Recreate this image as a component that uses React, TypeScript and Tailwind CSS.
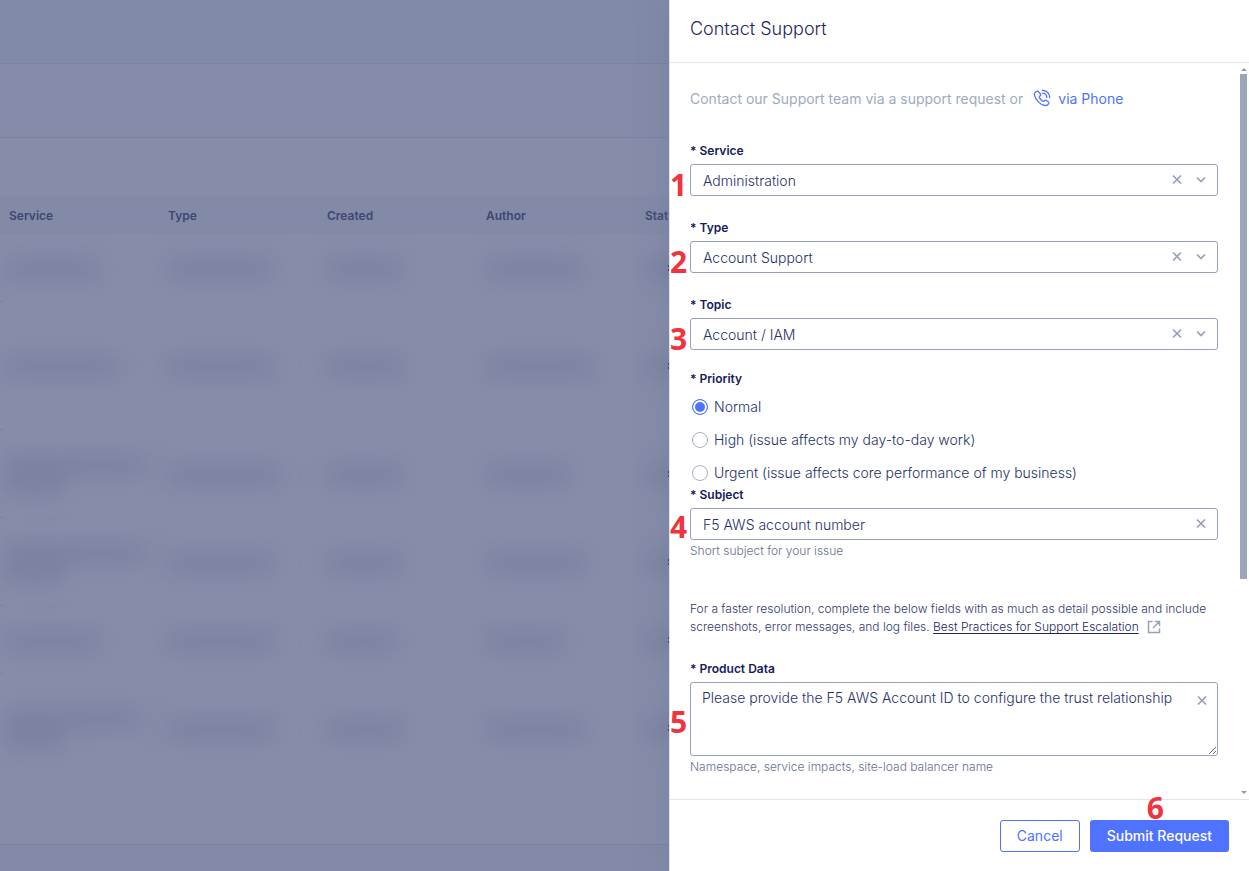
import React from "react";

const columns = ["Service", "Type", "Created", "Author", "Status"];

type Row = { height: string; first: string[]; rest: string[] };

const rows: Row[] = [
  { height: "h-[68px]", first: ["w-[96px]"], rest: ["w-[104px]", "w-[76px]", "w-[96px]"] },
  { height: "h-[128px]", first: ["w-[114px]"], rest: ["w-[106px]", "w-[76px]", "w-[108px]"] },
  { height: "h-[88px]", first: ["w-[140px]", "w-[60px]"], rest: ["w-[112px]", "w-[76px]", "w-[84px]"] },
  { height: "h-[88px]", first: ["w-[140px]", "w-[60px]"], rest: ["w-[106px]", "w-[76px]", "w-[100px]"] },
  { height: "h-[68px]", first: ["w-[96px]"], rest: ["w-[106px]", "w-[70px]", "w-[78px]"] },
  { height: "h-[108px]", first: ["w-[136px]", "w-[60px]"], rest: ["w-[106px]", "w-[76px]", "w-[98px]"] },
];

function Obscured({ widths }: { widths: string[] }) {
  return (
    <div className="flex flex-col gap-0.5 pt-0.5 blur-[11px]">
      {widths.map((w, i) => (
        <div key={i} className={`h-[18px] bg-[#7980a0] ${w}`} />
      ))}
    </div>
  );
}

function RequestsTable() {
  return (
    <main className="flex min-w-0 flex-1 flex-col overflow-hidden bg-[#868da9]">
      <div className="h-16 shrink-0 border-b border-[#7a83a5] bg-[#818aa7]" />
      <div className="h-[74px] shrink-0 border-b border-[#7a83a5] bg-[#848ba8]" />
      <div className="h-[58px] shrink-0" />
      <div className="min-h-0 flex-1 overflow-hidden">
        <table className="w-[795px] table-fixed border-collapse text-left">
          <thead>
            <tr className="h-[38px] bg-[#838aa7]">
              {columns.map((c) => (
                <th key={c} scope="col" className="p-0 pt-0.5 pl-[9px] text-[12px] font-semibold text-[#3d4771]">
                  {c}
                </th>
              ))}
            </tr>
          </thead>
          <tbody>
            {rows.map((row, i) => (
              <tr key={i} className={row.height}>
                <td className="relative p-0 pl-1">
                  <Obscured widths={row.first} />
                  {i < rows.length - 1 && <div className="absolute bottom-0 left-0 h-px w-[3px] bg-[#7780a3]" />}
                </td>
                {row.rest.map((w, j) => (
                  <td key={j} className="p-0 pl-[9px]">
                    <Obscured widths={[w]} />
                  </td>
                ))}
                <td className="relative p-0 pl-[9px]">
                  <Obscured widths={["w-[60px]"]} />
                  <div className="absolute top-1/2 left-8 flex -translate-y-1/2 flex-col gap-0.5">
                    <div className="h-0.5 w-px bg-[#1f4478]" />
                    <div className="h-0.5 w-px bg-[#1f4478]" />
                  </div>
                </td>
              </tr>
            ))}
          </tbody>
        </table>
      </div>
      <div className="h-[27px] shrink-0 border-t border-[#7a83a5] bg-[#838aa7]" />
    </main>
  );
}

function Step({ n, className }: { n: number; className: string }) {
  return (
    <span
      className={`pointer-events-none absolute font-['Open_Sans','Noto_Sans',sans-serif] text-[30px] leading-8 font-bold text-[#f0333c] ${className}`}
    >
      {n}
    </span>
  );
}

function ClearButton({ label, className = "" }: { label: string; className?: string }) {
  return (
    <button type="button" aria-label={label} className={`flex size-4 items-center justify-center text-[#97a1b8] ${className}`}>
      <svg viewBox="0 0 16 16" className="size-4" fill="none" stroke="currentColor" strokeWidth="1.7">
        <path d="M4 3.500l8 8M12 3.500l-8 8" />
      </svg>
    </button>
  );
}

function FieldLabel({ htmlFor, children }: { htmlFor: string; children: React.ReactNode }) {
  return (
    <label htmlFor={htmlFor} className="mb-1 block text-[12px] leading-[18px] font-semibold text-[#15205b]">
      * {children}
    </label>
  );
}

function SelectField({ id, label, value, step }: { id: string; label: string; value: string; step: number }) {
  return (
    <div>
      <FieldLabel htmlFor={id}>{label}</FieldLabel>
      <div className="relative flex h-8 items-center rounded-[3px] border border-[#97a1b8] pr-2">
        <Step n={step} className="top-1 -left-[21px]" />
        <select
          id={id}
          defaultValue={value}
          className="h-full min-w-0 flex-1 appearance-none bg-transparent pl-3 text-[14px] font-light text-[#26316a] outline-none"
        >
          <option>{value}</option>
        </select>
        <ClearButton label={`Clear ${label}`} className="mr-2" />
        <svg viewBox="0 0 16 16" className="pointer-events-none size-4" fill="none" stroke="#97a1b8" strokeWidth="1.7">
          <path d="M4 5.500l4 4 4-4" />
        </svg>
      </div>
    </div>
  );
}

const priorities = ["Normal", "High (issue affects my day-to-day work)", "Urgent (issue affects core performance of my business)"];

function PhoneIcon() {
  return (
    <svg viewBox="0 0 18 18" className="mb-0.5 size-[18px]" fill="none" stroke="currentColor" strokeWidth="1.3" strokeLinecap="round" strokeLinejoin="round">
      <path d="M3.400 2.500C1.900 3.300 1 4.500 1.400 6.200c.5 2.300 2.100 4.900 4.200 6.900 1.900 1.900 4.300 3.200 6.300 3.400 1.600.2 3-.6 3.800-1.900.4-.7.200-1.300-.3-1.700l-2-1.500c-.5-.4-1.100-.4-1.600 0l-1.100.8c-.4.300-.8.200-1.200-.1C8.300 11.200 7.200 10 6.400 8.600c-.2-.4-.2-.8.1-1.100l.9-1c.4-.5.400-1 .1-1.500L5.700 2.800c-.6-.8-1.400-.8-2.300-.3z" />
      <path d="M9.200 1.300c4.200-.2 7.500 3.100 7.500 7.200M9.500 4.200c2.500-.1 4.300 1.800 4.300 4.300" />
    </svg>
  );
}

function SupportPanel() {
  return (
    <aside className="relative flex w-[580px] max-w-full shrink-0 flex-col border-l border-[#dfe2ee] bg-white shadow-[0_0_30px_rgba(100,113,152,0.35)]">
      <header className="shrink-0 border-b border-[#e3e5f2] px-5 pt-[15px] pb-[19px]">
        <h1 className="text-[18px] leading-7 font-light text-[#1c2761]">Contact Support</h1>
      </header>

      <div className="flex min-h-0 flex-1">
        <form id="support-form" className="min-w-0 flex-1 overflow-hidden pt-[26px] pr-[22px] pl-5">
          <p className="flex items-center text-[14px] leading-5 text-[#a0a9be]">
            Contact our Support team via a support request or
            <a href="#phone" className="ml-2.5 flex items-center gap-[7px] text-[#4f73ff]">
              <PhoneIcon />
              via Phone
            </a>
          </p>

          <div className="mt-[33px] flex flex-col gap-[23px]">
            <SelectField id="service" label="Service" value="Administration" step={1} />
            <SelectField id="type" label="Type" value="Account Support" step={2} />
            <SelectField id="topic" label="Topic" value="Account / IAM" step={3} />
          </div>

          <fieldset className="mt-5">
            <legend className="text-[12px] leading-[18px] font-semibold text-[#15205b]">* Priority</legend>
            <div className="mt-[9px] flex flex-col gap-[13px]">
              {priorities.map((p, i) => (
                <label key={p} className="flex items-center gap-1.5 pl-0.5 text-[14px] leading-5 font-light text-[#26316a]">
                  <input
                    type="radio"
                    name="priority"
                    defaultChecked={i === 0}
                    className="size-4 shrink-0 appearance-none rounded-full border border-[#a8b0c4] bg-white checked:border-[#4f73ff] checked:bg-[#4f73ff] checked:shadow-[inset_0_0_0_2px_white]"
                  />
                  {p}
                </label>
              ))}
            </div>
          </fieldset>

          <div className="mt-[3px]">
            <FieldLabel htmlFor="subject">Subject</FieldLabel>
            <div className="relative flex h-8 items-center rounded-[3px] border border-[#97a1b8] pr-2">
              <Step n={4} className="top-0.5 -left-[21px]" />
              <input
                id="subject"
                defaultValue="F5 AWS account number"
                className="h-full min-w-0 flex-1 bg-transparent pl-3 text-[14px] font-light text-[#26316a] outline-none"
              />
              <ClearButton label="Clear Subject" />
            </div>
            <p className="mt-0.5 text-[12px] leading-[18px] font-light text-[#66708f]">Short subject for your issue</p>
          </div>

          <p className="mt-10 text-[12px] leading-[18px] font-light text-[#2f3a6e]">
            For a faster resolution, complete the below fields with as much as detail possible and include screenshots, error
            messages, and log files.{" "}
            <a href="#best-practices" className="text-[#1c2761] underline underline-offset-2">
              Best Practices for Support Escalation
            </a>
            <svg viewBox="0 0 14 14" className="ml-2 inline size-[14px] align-[-3px]" fill="none" stroke="#97a1b8" strokeWidth="1.5">
              <path d="M5.500 1.500h-4v11h11v-4M8 1.500h4.500V6M12.500 1.500L6 8" />
            </svg>
          </p>

          <div className="mt-6">
            <FieldLabel htmlFor="product-data">Product Data</FieldLabel>
            <div className="relative">
              <Step n={5} className="top-6 -left-5" />
              <textarea
                id="product-data"
                defaultValue="Please provide the F5 AWS Account ID to configure the trust relationship"
                className="block h-[74px] w-full resize rounded-[3px] border border-[#97a1b8] py-[5px] pr-8 pl-[11px] text-[14px] leading-5 font-light text-[#26316a] outline-none"
              />
              <ClearButton label="Clear Product Data" className="absolute top-[11px] right-2" />
            </div>
            <p className="mt-0.5 text-[12px] leading-[18px] font-light text-[#66708f]">
              Namespace, service impacts, site-load balancer name
            </p>
          </div>
        </form>

        <div aria-hidden="true" className="flex w-[9px] shrink-0 flex-col items-center pt-[5px] pr-0.5 pb-[5px]">
          <svg viewBox="0 0 6 3" className="mb-[3px] h-[3px] w-1.5 shrink-0" fill="#8f99b3">
            <path d="M0 3l3-3 3 3z" />
          </svg>
          <div className="flex w-full flex-1 flex-col">
            <div className="h-[70.5%] w-full bg-[#9ca5b9]" />
          </div>
          <svg viewBox="0 0 6 3" className="h-[3px] w-1.5 shrink-0" fill="#8f99b3">
            <path d="M0 0l3 3 3-3z" />
          </svg>
        </div>
      </div>

      <footer className="flex shrink-0 justify-end gap-2.5 border-t border-[#e3e5f2] px-5 pt-5 pb-[19px] text-[14px]">
        <button type="button" className="h-8 rounded-[3px] border border-[#4f73ff] px-4 pb-0.5 text-[#4f73ff]">
          Cancel
        </button>
        <div className="relative">
          <Step n={6} className="-top-7 left-[57px]" />
          <button type="submit" form="support-form" className="h-8 rounded-[3px] bg-[#4f73ff] px-[17px] pb-0.5 font-medium text-white">
            Submit Request
          </button>
        </div>
      </footer>
    </aside>
  );
}

export default function App() {
  return (
    <div className="flex h-screen overflow-hidden font-['Inter','Liberation_Sans',sans-serif]">
      <RequestsTable />
      <SupportPanel />
    </div>
  );
}
